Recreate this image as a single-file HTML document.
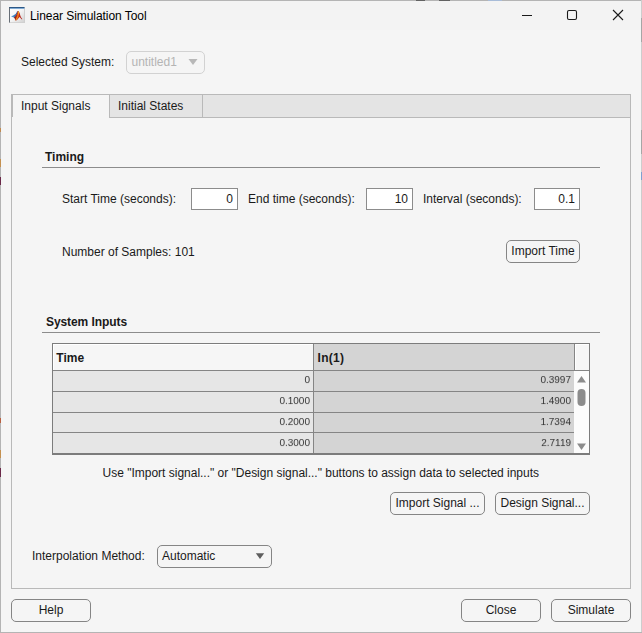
<!DOCTYPE html>
<html><head><meta charset="utf-8">
<style>
*{box-sizing:border-box;margin:0;padding:0}
html,body{width:642px;height:633px;overflow:hidden;background:#f5f5f5}
body{position:relative;font-family:"Liberation Sans",Arial,sans-serif;font-size:12px;color:#1a1a1a}
.a{position:absolute;white-space:nowrap;line-height:14px}
.b{font-weight:bold}
.btn{position:absolute;border:1px solid #858585;border-radius:5px;background:#f5f5f5;text-align:center;line-height:21px;height:23px;white-space:nowrap}
.inp{position:absolute;border:1px solid #8c8c8c;background:#fff;height:22px;width:47px;text-align:right;padding-right:4px;line-height:20px}
.hl{position:absolute;height:1px;background:#8c8c8c}
.vl{position:absolute;width:1px;background:#8c8c8c}
.num{position:absolute;font-size:10px;color:#333;text-align:right;line-height:12px;white-space:nowrap;will-change:transform;transform:scaleY(0.9);transform-origin:0 10px}
</style></head><body>
<!-- window frame -->
<div style="position:absolute;left:0;top:0;width:642px;height:30px;background:#f3f3f3"></div>
<div style="position:absolute;left:0;top:0;width:642px;height:1px;background:#b4b4b4"></div><div style="position:absolute;left:416px;top:0;width:9px;height:1px;background:#626262"></div><div style="position:absolute;left:439px;top:0;width:11px;height:1px;background:#626262"></div><div style="position:absolute;left:488px;top:0;width:14px;height:1px;background:#a8bcd8"></div>
<div style="position:absolute;left:0;top:0;width:1px;height:633px;background:#b4b4b4"></div>
<div style="position:absolute;left:641px;top:0;width:1px;height:633px;background:#cdcdcd"></div><div style="position:absolute;left:641px;top:18px;width:1px;height:24px;background:#a6a6a6"></div><div style="position:absolute;left:641px;top:130px;width:1px;height:24px;background:#a6a6a6"></div><div style="position:absolute;left:641px;top:172px;width:1px;height:8px;background:#7fa0d0"></div>
<div style="position:absolute;left:0;top:632px;width:642px;height:1px;background:#b4b4b4"></div>
<div style="position:absolute;left:0;top:128px;width:1px;height:4px;background:#c08a50"></div>
<div style="position:absolute;left:0;top:159px;width:1px;height:8px;background:#c49050"></div>
<div style="position:absolute;left:0;top:177px;width:1px;height:8px;background:#6a2848"></div>
<div style="position:absolute;left:0;top:418px;width:1px;height:5px;background:#b86040"></div>
<div style="position:absolute;left:0;top:450px;width:1px;height:8px;background:#c49050"></div>
<div style="position:absolute;left:0;top:468px;width:1px;height:9px;background:#6a2848"></div>
<!-- title icon -->
<svg style="position:absolute;left:9px;top:7px" width="16" height="16" viewBox="0 0 16 16">
<defs>
<linearGradient id="gb" x1="0" y1="0" x2="1" y2="1"><stop offset="0" stop-color="#ffffff"/><stop offset="0.5" stop-color="#f4f4f4"/><stop offset="1" stop-color="#d2d2d2"/></linearGradient>
<linearGradient id="gt" x1="0" y1="0" x2="0" y2="1"><stop offset="0" stop-color="#4f86bf"/><stop offset="1" stop-color="#b5d2ec"/></linearGradient>
<linearGradient id="gbl" x1="0" y1="0" x2="1" y2="0"><stop offset="0" stop-color="#58a4de"/><stop offset="1" stop-color="#2a5c9c"/></linearGradient>
<linearGradient id="gr" x1="0" y1="0" x2="1" y2="0"><stop offset="0" stop-color="#7c1612"/><stop offset="0.45" stop-color="#c8321c"/><stop offset="1" stop-color="#b01e1e"/></linearGradient>
<linearGradient id="gy" x1="0" y1="0" x2="0" y2="1"><stop offset="0" stop-color="#ffe81e"/><stop offset="0.45" stop-color="#ee7418"/><stop offset="1" stop-color="#fbae1e"/></linearGradient>
</defs>
<rect x="0" y="0" width="16" height="16" fill="#cfcfcf"/>
<rect x="1" y="1" width="14" height="14.200" fill="url(#gb)"/>
<rect x="0" y="0" width="15.500" height="1" fill="#2c5887"/>
<rect x="0.800" y="1" width="14.700" height="1" fill="url(#gt)"/>
<rect x="0" y="0.500" width="0.900" height="15" fill="#5c646e"/>
<path d="M2 9.400 L4.600 8.300 L6.600 7 L7.600 5.400 L8.200 4.100 L8.800 4.300 L8 7 L7 9 L5.500 10.700 L4 10.200 Z" fill="url(#gbl)"/>
<path d="M5 10.600 L6.800 8.800 L7.800 6.800 L8.600 4.300 L9.700 4.100 L10.700 6.200 L11.300 8.600 L12 10.200 L13.300 12 L12.900 12.400 L11.500 10.900 L10.600 10 L9.300 11.400 L7.800 13.200 L6.300 13.600 L6 12 Z" fill="url(#gr)"/>
<path d="M6.300 13.500 L7.600 10.600 L8.900 6.500 L9.400 4.300 L9.900 4.700 L9.900 7.500 L9.200 10.200 L7.900 12.600 Z" fill="url(#gy)"/>
</svg>
<div class="a" id="title" style="left:30px;top:9px;font-size:12px;letter-spacing:-0.06px;color:#000">Linear Simulation Tool</div>
<!-- window controls -->
<svg style="position:absolute;left:515px;top:5px" width="120" height="22" viewBox="0 0 120 22">
<path d="M7 10.5 H17" stroke="#1a1a1a" stroke-width="1" fill="none"/>
<rect x="52.5" y="5.500" width="9" height="9" rx="1.5" fill="none" stroke="#1a1a1a" stroke-width="1.1"/>
<path d="M98 5 L108 15 M108 5 L98 15" stroke="#1a1a1a" stroke-width="1.1" fill="none"/>
</svg>

<div class="a" style="left:21px;top:55px">Selected System:</div>
<div style="position:absolute;left:126px;top:51px;width:79px;height:23px;border:1px solid #d2d2d2;border-radius:5px"></div>
<div class="a" style="left:131.5px;top:55px;color:#b4b4b4">untitled1</div>
<svg style="position:absolute;left:188px;top:58px" width="10" height="8"><path d="M0.5 1 L9.5 1 L5 7 Z" fill="#b8b8b8"/></svg>

<!-- tab strip -->
<div style="position:absolute;left:11px;top:94px;width:620px;height:24px;background:#e4e4e4;border:1px solid #b9b9b9"></div>
<div style="position:absolute;left:11px;top:94px;width:99px;height:24px;background:#f5f5f5;border:1px solid #b9b9b9;border-left-width:2px;border-bottom:none"></div>
<div style="position:absolute;left:12px;top:117px;width:97px;height:2px;background:#f5f5f5"></div>
<div class="vl" style="left:202px;top:95px;height:22px;background:#b9b9b9"></div>
<div class="a" style="left:21px;top:99px">Input Signals</div>
<div class="a" style="left:118px;top:99px">Initial States</div>
<!-- panel border -->
<div style="position:absolute;left:11px;top:117px;width:620px;height:472px;border:1px solid #b9b9b9;border-top:none"></div>

<!-- Timing -->
<div class="a b" style="left:45px;top:150px">Timing</div>
<div class="hl" style="left:42px;top:167px;width:558px"></div>
<div class="a" style="left:62px;top:192px">Start Time (seconds):</div>
<div class="inp" style="left:191px;top:188px">0</div>
<div class="a" style="left:248px;top:192px">End time (seconds):</div>
<div class="inp" style="left:366px;top:188px">10</div>
<div class="a" style="left:423px;top:192px">Interval (seconds):</div>
<div class="inp" style="left:534px;top:188px;width:46px">0.1</div>
<div class="a" style="left:62px;top:245px">Number of Samples: 101</div>
<div class="btn" style="left:506px;top:240px;width:74px">Import Time</div>

<!-- System Inputs -->
<div class="a b" style="left:46px;top:315px;letter-spacing:-0.08px">System Inputs</div>
<div class="hl" style="left:42px;top:332px;width:558px"></div>

<!-- table -->
<div style="position:absolute;left:52px;top:343px;width:538px;height:112px;background:#fcfcfc;border:1px solid #7c7c7c;border-bottom:2px solid #7c7c7c"></div>
<div style="position:absolute;left:53px;top:344px;width:260px;height:26px;background:#f6f6f6"></div>
<div style="position:absolute;left:314px;top:344px;width:260px;height:26px;background:#d4d4d4"></div>
<div style="position:absolute;left:575px;top:344px;width:14px;height:26px;background:#f6f6f6"></div>
<div style="position:absolute;left:53px;top:371px;width:260px;height:82px;background:#e6e6e6"></div>
<div style="position:absolute;left:314px;top:371px;width:260px;height:82px;background:#d4d4d4"></div>
<div class="hl" style="left:53px;top:344px;width:260px;background:#fff"></div><div class="vl" style="left:53px;top:344px;height:26px;background:#fff"></div><div class="hl" style="left:575px;top:344px;width:14px;background:#fff"></div><div class="vl" style="left:575px;top:344px;height:26px;background:#fff"></div>
<div class="hl" style="left:53px;top:370px;width:536px;background:#858585"></div>
<div class="hl" style="left:53px;top:391px;width:521px;background:#858585"></div>
<div class="hl" style="left:53px;top:412px;width:521px;background:#858585"></div>
<div class="hl" style="left:53px;top:432px;width:521px;background:#858585"></div>
<div class="vl" style="left:313px;top:344px;height:109px;background:#858585"></div>
<div class="vl" style="left:574px;top:344px;height:26px;background:#858585"></div>
<div class="a b" style="left:56.3px;top:351px">Time</div>
<div class="a b" style="left:317.6px;top:351px;letter-spacing:0.25px">In(1)</div>
<div class="num" style="left:253px;width:57px;top:374px">0</div>
<div class="num" style="left:253px;width:57px;top:395px">0.1000</div>
<div class="num" style="left:253px;width:57px;top:416px">0.2000</div>
<div class="num" style="left:253px;width:57px;top:437px">0.3000</div>
<div class="num" style="left:513px;width:58px;top:374px">0.3997</div>
<div class="num" style="left:513px;width:58px;top:395px">1.4900</div>
<div class="num" style="left:513px;width:58px;top:416px">1.7394</div>
<div class="num" style="left:513px;width:58px;top:437px">2.7119</div>
<svg style="position:absolute;left:575px;top:371px" width="14" height="82" viewBox="0 0 14 82">
<path d="M2 11.500 L6.500 5 L11 11.500 Z" fill="#8c8c8c"/>
<rect x="2.500" y="18" width="8" height="17" rx="4" fill="#8c8c8c"/>
<path d="M2 72.500 L11 72.500 L6.500 79 Z" fill="#8c8c8c"/>
</svg>

<div class="a" style="left:102.6px;top:466px;letter-spacing:-0.01px">Use "Import signal..." or "Design signal..." buttons to assign data to selected inputs</div>
<div class="btn" style="left:390px;top:492px;width:95px">Import Signal ...</div>
<div class="btn" style="left:495px;top:492px;width:95px">Design Signal...</div>

<div class="a" style="left:32px;top:549px">Interpolation Method:</div>
<div style="position:absolute;left:157px;top:545px;width:115px;height:23px;border:1px solid #858585;border-radius:5px"></div>
<div class="a" style="left:162px;top:549px">Automatic</div>
<svg style="position:absolute;left:255px;top:552px" width="10" height="8"><path d="M0.8 1.300 L9.200 1.300 L5 7 Z" fill="#5e5e5e"/></svg>

<div class="btn" style="left:11px;top:599px;width:80px">Help</div>
<div class="btn" style="left:461px;top:599px;width:80px">Close</div>
<div class="btn" style="left:551px;top:599px;width:80px">Simulate</div>
</body></html>
